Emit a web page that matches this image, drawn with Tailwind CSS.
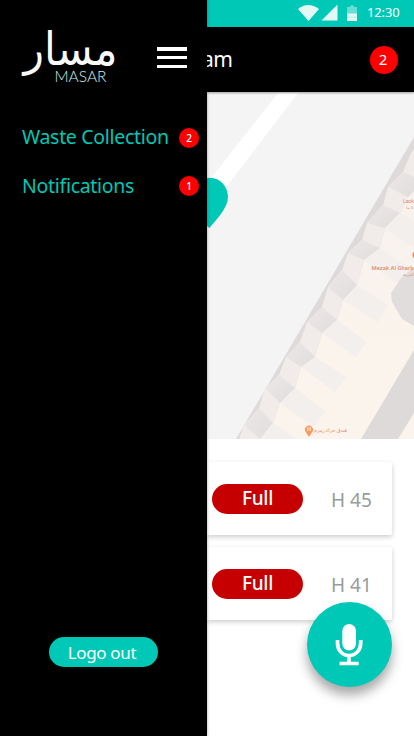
<!DOCTYPE html>
<html lang="en">
<head>
<meta charset="utf-8">
<meta name="viewport" content="width=device-width, initial-scale=1">
<title>Masar</title>
<script src="https://cdn.jsdelivr.net/npm/@tailwindcss/browser@4"></script>
</head>
<body class="flex h-[736px] w-[414px] overflow-hidden bg-white font-['Noto_Sans','Open_Sans',sans-serif]">
<aside class="z-10 flex w-[207px] shrink-0 flex-col bg-black shadow-[0_0_3px_rgba(0,0,0,0.35)]">
  <header class="flex h-[110px] justify-between pt-[28px] pr-[20px] pl-[20px]">
    <svg class="h-[60px] w-[100px] overflow-visible" viewBox="0 0 100 60" role="img" aria-label="Masar">
      <text x="97.500" y="33" transform="scale(1 1.120)" direction="rtl" textLength="94" lengthAdjust="spacingAndGlyphs" font-family="'DejaVu Sans', sans-serif" font-size="41" fill="#fafafa">مسار</text>
      <text x="34.500" y="54" textLength="52" lengthAdjust="spacingAndGlyphs" font-family="Lato, sans-serif" font-size="15.500" font-weight="300" fill="#c8f4f0">MASAR</text>
    </svg>
    <button class="mt-[19px] flex h-[21px] w-[30px] flex-col justify-between" aria-label="Menu">
      <span class="h-[3.500px] w-full bg-white"></span>
      <span class="h-[3px] w-full bg-white"></span>
      <span class="h-[3px] w-full bg-white"></span>
    </button>
  </header>
  <nav class="flex flex-col gap-[19px] pt-[13px] pr-[8px] pl-[22px] text-[#00c8b6]">
    <a class="flex h-[30px] items-center justify-between text-[19.500px] tracking-[-0.300px] whitespace-nowrap"><span class="-mt-[2px]">Waste Collection</span><b class="flex size-5 items-center justify-center rounded-full bg-[#ff0000] text-[10px] font-medium tracking-normal text-white">2</b></a>
    <a class="-mt-px flex h-[30px] items-center justify-between text-[19.500px] tracking-[-0.300px] whitespace-nowrap"><span>Notifications</span><b class="flex size-5 items-center justify-center rounded-full bg-[#ff0000] text-[10px] font-medium tracking-normal text-white">1</b></a>
  </nav>
  <button class="mt-auto mb-[69px] ml-[49px] flex h-[30px] w-[109px] items-center justify-center rounded-full bg-[#00c8b6] pt-px pr-[3px] text-[17px] tracking-[-0.350px] text-white">Logo out</button>
</aside>
<main class="relative flex w-[207px] flex-col">
  <div class="flex h-[27px] shrink-0 items-center bg-[#00c8b6] pl-[91px] text-white">
    <svg class="-mt-px h-[20px] w-[61px]" viewBox="0 0 61 20" fill="#e3f9f6">
      <path d="M0 6Q10 -2 21 6L10.500 18Z"/><path d="M23.500 17.500H39.500V1.500Z"/>
      <path d="M49 4h3V2.500h4V4h3v14H49Z" fill="#66ded3"/><path d="M49 10.500h10V18H49Z"/><path d="M49 13.800h10v.7H49Z" fill="#a5ebe4"/>
    </svg>
    <time class="-mt-[2px] ml-[8px] text-[13px] leading-none tracking-[-0.150px]">12:30</time>
  </div>
  <header class="z-[1] flex h-[65px] shrink-0 items-center justify-between bg-black pr-[16px] text-white shadow-[0_1px_2px_rgba(0,0,0,0.4)]">
    <h1 class="ml-[-5px] text-[21px] tracking-[-0.500px]">am</h1>
    <span class="flex size-7 items-center justify-center rounded-full bg-[#ff0000] pr-[2px] text-[15px]">2</span>
  </header>
  <svg class="mt-px h-[346px] w-[207px] shrink-0" viewBox="0 0 207 346">
    <defs>
      <linearGradient id="roof" x1="0" y1="0" x2="0" y2="1"><stop offset=".3" stop-color="#f8f2ef"/><stop offset=".7" stop-color="#fbf4ec"/></linearGradient>
      <linearGradient id="notch" x1="0" y1="0" x2="1" y2="1"><stop stop-color="#ece8e7"/><stop offset="1" stop-color="#e2dddd"/></linearGradient>
    </defs>
    <path fill="#f4f4f4" d="M0 0H207V346H0Z"/>
    <path fill="#fff" d="M71 0H91L20 93L0 114V84L5 84Z"/>
    <path fill="url(#roof)" d="M207 44L29 346H207Z"/>
    <!-- facade along the building's edge -->
    <path fill="#dedada" d="M207 44L29 346H53L66 330L73 310L88 295L94 274L108 264L115 240L130 227L136 207L150 192L157 167L173 155L178 135L193 120L201 104L207 98Z"/>
    <path fill="#f1ece9" d="M207 56L204 60L196 79L181 94L176 112L160 130L155 147L141 160L135 177L121 194L115 214L100 229L93 249L79 264L72 282L58 295L52 315L37 332L32 346H53L66 330L73 310L88 295L94 274L108 264L115 240L130 227L136 207L150 192L157 167L173 155L178 135L193 120L201 104L207 98Z"/>
    <g fill="url(#notch)">
      <path d="M196 79L181 94L201 104L207 98V84Z"/>
      <path d="M176 112L160 130L178 135L193 120Z"/>
      <path d="M155 147L141 160L157 167L173 155Z"/>
      <path d="M135 177L121 194L136 207L150 192Z"/>
      <path d="M115 214L100 229L115 240L130 227Z"/>
      <path d="M93 249L79 264L94 274L108 264Z"/>
      <path d="M72 282L58 295L73 310L88 295Z"/>
      <path d="M52 315L37 332L53 346L66 330Z"/>
    </g>
    <!-- roof bands -->
    <g fill="#f3efed">
      <path d="M193 120L207 128V154L178 135Z"/>
      <path d="M173 155L203 176L192 191L157 167Z"/>
      <path d="M150 192L181 212L170 229L136 207Z"/>
      <path d="M130 227L160 249L149 264L115 240Z"/>
      <path d="M108 264L139 284L128 299L94 274Z"/>
      <path d="M88 295L118 318L107 334L73 310Z"/>
      <path d="M66 330L90 346H53Z"/>
    </g>
    <path fill="#e2dddd" d="M207 174L195 184L184 200L185 209L195 226L207 233Z"/>
    <path fill="#dfdada" d="M207 257L154 346H191L207 320Z"/>
    <g fill="#e08e6c" font-family="Roboto, 'DejaVu Sans', sans-serif">
      <text x="196" y="110" font-size="5.500" textLength="11">Laok</text>
      <text x="206" y="116" direction="rtl" font-size="4">لا ما</text>
      <text x="164.500" y="177" font-size="6" font-weight="500" textLength="42" lengthAdjust="spacingAndGlyphs">Mezak Al Gharb</text>
      <text x="207" y="183" direction="rtl" font-size="4" textLength="11">الغربية</text>
      <circle cx="210" cy="162" r="4.500" fill="#ef8750"/>
      <path fill="#fa995f" d="M102 344L98.800 339A4 4 0 1 1 105.200 339Z"/>
      <path d="M100.500 334v4M102 334v4M103.500 334v4" stroke="#fff" stroke-width=".6"/>
      <text x="140" y="338.500" direction="rtl" font-size="5" textLength="33">فندق حراء زمزم</text>
    </g>
    <path fill="#00c8b6" d="M0 85C12 83 21 93 21 104C21 115 9 127 2.500 135L0 133Z"/>
  </svg>
  <section class="flex flex-col gap-3 pt-[23px] text-[19px]">
    <article class="flex h-[73px] w-[185px] items-center rounded-r-[2px] bg-white pl-[5px] shadow-[0_2px_5px_rgba(0,0,0,0.2)]">
      <span class="flex h-[30px] w-[91px] items-center justify-center rounded-full bg-[#c60000] text-[19px] font-medium tracking-[-0.250px] text-white">Full</span>
      <span class="ml-[28px] pt-[4px] whitespace-nowrap text-[#999b9d]">H 45</span>
    </article>
    <article class="flex h-[73px] w-[185px] items-center rounded-r-[2px] bg-white pl-[5px] shadow-[0_2px_5px_rgba(0,0,0,0.2)]">
      <span class="flex h-[30px] w-[91px] items-center justify-center rounded-full bg-[#c60000] text-[19px] font-medium tracking-[-0.250px] text-white">Full</span>
      <span class="ml-[28px] pt-[4px] whitespace-nowrap text-[#999b9d]">H 41</span>
    </article>
  </section>
  <button class="absolute top-[602px] left-[100px] size-[85px] rounded-full bg-[#00c8b6] shadow-[0_8px_12px_rgba(0,0,0,0.35)]" aria-label="Record">
    <svg class="size-[85px]" viewBox="0 0 85 85" fill="none" stroke="#fff"><rect x="35.300" y="22" width="13.700" height="26.500" rx="6.850" fill="#fff" stroke="none"/><path d="M30.500 38V41C30.500 48 35 53.500 42 53.500S53.700 48 53.700 41V38M42 53V61.500M32.500 61.500H51.700" stroke-width="3.700"/></svg>
  </button>
</main>
</body>
</html>
